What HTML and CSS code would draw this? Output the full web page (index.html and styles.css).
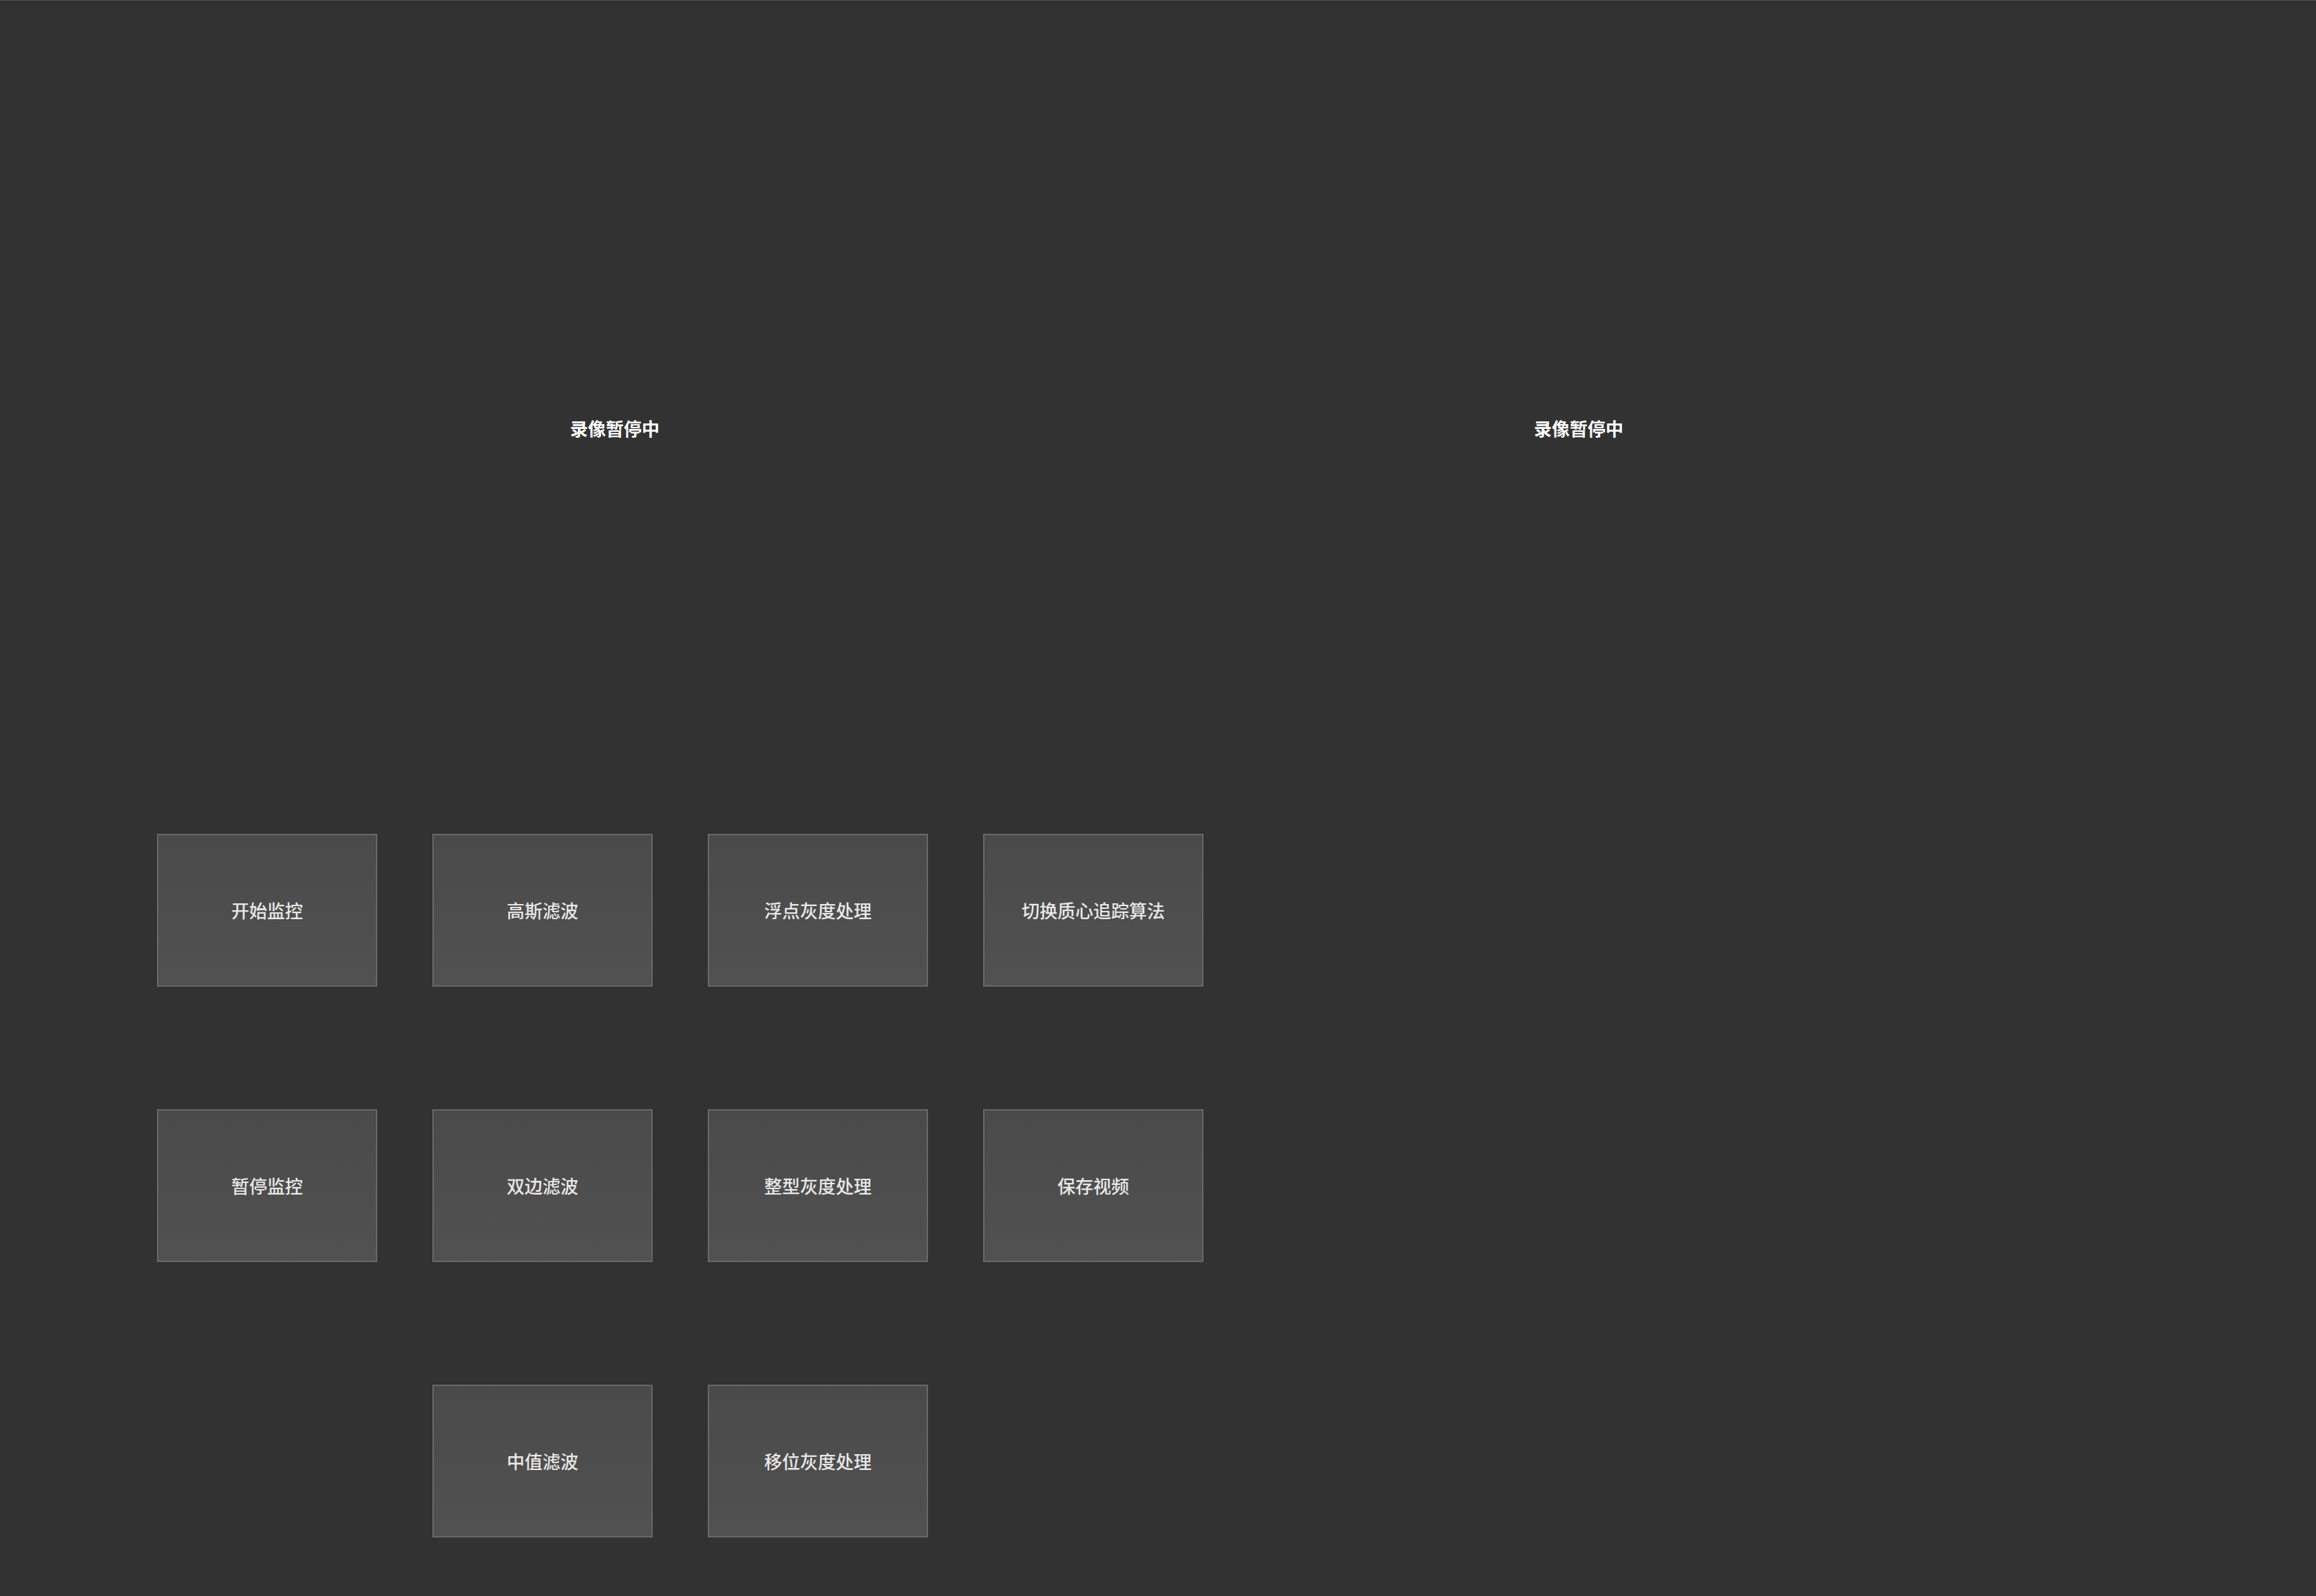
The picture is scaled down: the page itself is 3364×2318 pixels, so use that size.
FILE: index.html
```html
<!DOCTYPE html>
<html lang="zh-CN">
<head>
<meta charset="utf-8">
<title>监控</title>
<link rel="stylesheet" href="styles.css">
</head>
<body>
<div class="window">
  <div class="videos">
    <div class="video video-left"><span class="video-label">录像暂停中</span></div>
    <div class="video video-right"><span class="video-label">录像暂停中</span></div>
  </div>
  <div class="controls">
    <button class="btn">开始监控</button>
    <button class="btn">高斯滤波</button>
    <button class="btn">浮点灰度处理</button>
    <button class="btn">切换质心追踪算法</button>
    <button class="btn">暂停监控</button>
    <button class="btn">双边滤波</button>
    <button class="btn">整型灰度处理</button>
    <button class="btn">保存视频</button>
    <button class="btn col-2">中值滤波</button>
    <button class="btn">移位灰度处理</button>
  </div>
</div>
</body>
</html>
```
FILE: styles.css
```css
html, body {
  margin: 0;
  padding: 0;
  background: #323232;
}
body {
  font-family: "Noto Sans CJK SC", "Noto Sans", sans-serif;
  color: #ffffff;
  height: 2318px;
  overflow: hidden;
}
.window {
  border-top: 2px solid #474747;
  height: 2316px;
  box-sizing: border-box;
}
.videos {
  display: grid;
  grid-template-columns: 1786px 1014px;
  height: 1209px;
  border-top: 1px solid #1f1f1f;
  box-sizing: border-box;
}
.video {
  display: flex;
  justify-content: center;
  align-items: flex-start;
  padding-top: 599px;
}
.video-label {
  font-size: 26px;
  font-weight: 700;
  line-height: 39px;
  color: #ffffff;
}
.controls {
  display: grid;
  grid-template-columns: repeat(4, 320px);
  grid-auto-rows: 222px;
  column-gap: 80px;
  row-gap: 178px;
  margin-left: 228px;
}
.btn {
  font-family: "Noto Sans CJK SC", "Noto Sans", sans-serif;
  font-size: 26px;
  font-weight: 500;
  color: #e8e8e8;
  background: linear-gradient(#4a4a4a, #515151);
  border: 2px solid #686868;
  border-radius: 0;
  padding: 0 0 2px 0;
  margin: 0;
  width: 320px;
  height: 222px;
  box-sizing: border-box;
}
.col-2 {
  grid-column: 2;
}
```
